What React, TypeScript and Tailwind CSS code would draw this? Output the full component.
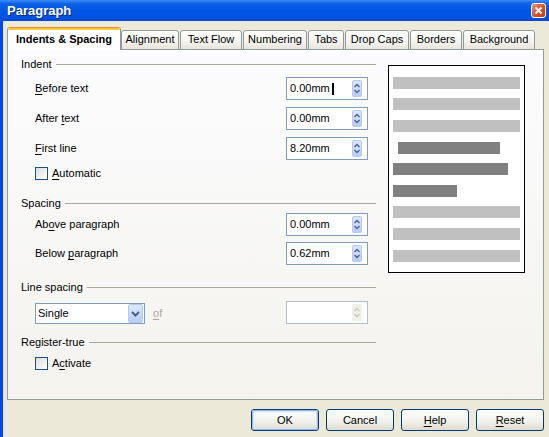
import React from "react";

// Windows XP styled "Paragraph" dialog

const U = ({ children }: { children: React.ReactNode }) => (
  <span className="underline underline-offset-[2px] decoration-[1px]">{children}</span>
);

const tabs = [
  { label: "Indents & Spacing", w: 114, ml: 0, active: true },
  { label: "Alignment", w: 58, ml: 0 },
  { label: "Text Flow", w: 62, ml: 1 },
  { label: "Numbering", w: 64, ml: 1 },
  { label: "Tabs", w: 36, ml: 1 },
  { label: "Drop Caps", w: 64, ml: 1 },
  { label: "Borders", w: 52, ml: 1 },
  { label: "Background", w: 72, ml: 1 },
];

const bars = [
  { top: 11, left: 4, w: 127, dark: false },
  { top: 9, left: 4, w: 127, dark: false },
  { top: 10, left: 4, w: 127, dark: false },
  { top: 10, left: 9, w: 102, dark: true },
  { top: 9, left: 4, w: 115, dark: true },
  { top: 10, left: 4, w: 64, dark: true },
  { top: 9, left: 4, w: 127, dark: false },
  { top: 10, left: 4, w: 127, dark: false },
  { top: 10, left: 4, w: 127, dark: false },
];

const SpinButton = ({ disabled }: { disabled?: boolean }) => (
  <div
    className={`w-[10px] h-[17px] rounded-[2px] flex items-center justify-center ${
      disabled
        ? "bg-[#f0efe8]"
        : "bg-[linear-gradient(to_bottom,#dde7fe,#b9ccf6)] border border-[#b5c8f2]"
    }`}
  >
    <svg width="8" height="13" viewBox="0 0 8 13">
      <path
        d="M1.5 5 L4 2.5 L6.5 5 M1.5 8 L4 10.5 L6.5 8"
        fill="none"
        stroke={disabled ? "#c9c8c0" : "#4d6185"}
        strokeWidth="1.4"
      />
    </svg>
  </div>
);

const SpinField = ({ value, caret, disabled }: { value?: string; caret?: boolean; disabled?: boolean }) => (
  <div
    className={`w-[82px] h-[23px] border bg-white flex items-center ${
      disabled ? "border-[#b2bdcd]" : "border-[#7f9db9]"
    }`}
  >
    <div className="flex-1 flex items-center pl-[3px] text-[11px] text-black">
      {value}
      {caret && <span className="ml-[2px] w-[2px] h-[12px] bg-black" />}
    </div>
    <SpinButton disabled={disabled} />
    <div className="w-[5px]" />
  </div>
);

const Checkbox = () => (
  <div className="w-[13px] h-[13px] border border-[#1c5180] bg-[linear-gradient(135deg,#dcdcd7,#ffffff)]" />
);

const Header = ({ children }: { children: React.ReactNode }) => (
  <div className="h-[14px] flex items-center text-[11px] text-black">
    <span>{children}</span>
    <div className="flex-1 ml-[4px] h-px bg-[#aca899]" />
  </div>
);

const Row = ({ label, value, caret, className }: { label: React.ReactNode; value: string; caret?: boolean; className: string }) => (
  <div className={`h-[23px] flex items-center ${className}`}>
    <div className="w-[265px] pl-[14px] text-[11px] text-black">{label}</div>
    <SpinField value={value} caret={caret} />
  </div>
);

const Button = ({ children, def }: { children: React.ReactNode; def?: boolean }) => (
  <div className="w-[68px] h-[22px] rounded-[3px] border border-[#003c74] bg-[linear-gradient(to_bottom,#ffffff,#f0f0ea_60%,#dedbcf)] flex items-center justify-center">
    <div
      className={`w-full h-full rounded-[2px] flex items-center justify-center text-[11px] text-black ${
        def ? "border border-[#98b8ea] shadow-[inset_0_0_0_1px_#cee0fb]" : ""
      }`}
    >
      {children}
    </div>
  </div>
);

export default function App() {
  return (
    <div className="w-[549px] h-[437px] bg-[#ece9d8] flex flex-col overflow-hidden font-['Liberation_Sans',Arial,sans-serif]">
      {/* title bar */}
      <div className="h-[21px] flex items-center bg-[linear-gradient(to_bottom,#3b8cf6_0%,#0d61e8_18%,#0055e5_50%,#0152e1_85%,#0443c9_100%)]">
        <span className="ml-[7px] text-[13px] font-bold text-white [text-shadow:1px_1px_0_#0a2a8a]">Paragraph</span>
        <div className="ml-auto mr-[3px] w-[15px] h-[15px] rounded-[3px] border border-white bg-[linear-gradient(135deg,#f09070,#d9542c_50%,#c03a12)] flex items-center justify-center">
          <svg width="9" height="9" viewBox="0 0 9 9">
            <path d="M1.5 1.5 L7.5 7.5 M7.5 1.5 L1.5 7.5" stroke="#fff" strokeWidth="1.8" />
          </svg>
        </div>
      </div>

      <div className="flex-1 flex flex-col border-l-[3px] border-[#0a45dc]">
        {/* tabs */}
        <div className="mt-[6px] h-[23px] flex items-end pl-[4px]">
          {tabs.map((t) =>
            t.active ? (
              <div
                key={t.label}
                style={{ width: t.w }}
                className="relative z-10 h-[23px] bg-white border-x border-[#919b9c] rounded-t-[3px] overflow-hidden flex flex-col"
              >
                <div className="h-[3px] bg-[#ffc83c] border-t border-[#e68b2c]" />
                <div className="flex-1 flex items-center justify-center pb-[2px] text-[11px] font-bold text-black">
                  {t.label}
                </div>
              </div>
            ) : (
              <div
                key={t.label}
                style={{ width: t.w, marginLeft: t.ml }}
                className="h-[20px] border border-[#919b9c] rounded-t-[3px] bg-[linear-gradient(to_bottom,#ffffff,#f4f3ee_60%,#e6e4dc)] flex items-center justify-center pb-[1px] text-[11px] text-black"
              >
                {t.label}
              </div>
            )
          )}
        </div>

        {/* tab page */}
        <div className="-mt-px ml-[4px] w-[537px] h-[351px] border border-[#919b9c] bg-[linear-gradient(to_bottom,#fcfcfe,#f4f3ee)] flex">
          <div className="w-[355px] ml-[13px] pt-[7px] flex flex-col">
            <Header>Indent</Header>
            <Row className="mt-[6px]" label={<><U>B</U>efore text</>} value="0.00mm" caret />
            <Row className="mt-[7px]" label={<>After <U>t</U>ext</>} value="0.00mm" />
            <Row className="mt-[7px]" label={<><U>F</U>irst line</>} value="8.20mm" />
            <div className="mt-[6px] h-[14px] pl-[14px] flex items-center gap-[4px] text-[11px] text-black">
              <Checkbox />
              <span>
                <U>A</U>utomatic
              </span>
            </div>

            <div className="mt-[16px]">
              <Header>Spacing</Header>
            </div>
            <Row className="mt-[3px]" label={<>Ab<U>o</U>ve paragraph</>} value="0.00mm" />
            <Row className="mt-[6px]" label={<>Below <U>p</U>aragraph</>} value="0.62mm" />

            <div className="mt-[15px]">
              <Header>Line spacing</Header>
            </div>
            <div className="mt-[7px] h-[23px] flex items-start">
              <div className="w-[265px] pl-[14px] flex items-center">
                <div className="mt-[2px] w-[110px] h-[21px] border border-[#7f9db9] bg-white flex items-center">
                  <span className="flex-1 pl-[2px] text-[11px] text-black">Single</span>
                  <div className="w-[15px] h-[19px] mr-px rounded-[2px] border border-[#b5c8f2] bg-[linear-gradient(to_bottom,#dde7fe,#b9ccf6)] flex items-center justify-center">
                    <svg width="9" height="6" viewBox="0 0 9 6">
                      <path d="M1 1 L4.5 4.5 L8 1" fill="none" stroke="#4d6185" strokeWidth="2" />
                    </svg>
                  </div>
                </div>
                <span className="ml-[8px] mt-[2px] text-[11px] text-[#aca899]">
                  <U>o</U>f
                </span>
              </div>
              <SpinField disabled />
            </div>

            <div className="mt-[11px]">
              <Header>Register-true</Header>
            </div>
            <div className="mt-[7px] h-[14px] pl-[14px] flex items-center gap-[4px] text-[11px] text-black">
              <Checkbox />
              <span>
                A<U>c</U>tivate
              </span>
            </div>
          </div>

          {/* preview */}
          <div className="ml-[12px] mt-[15px] w-[137px] h-[208px] border border-black bg-white flex flex-col">
            {bars.map((b, i) => (
              <div
                key={i}
                style={{ marginTop: b.top, marginLeft: b.left, width: b.w }}
                className={`h-[12px] ${b.dark ? "bg-[#808080]" : "bg-[#c0c0c0]"}`}
              />
            ))}
          </div>
        </div>

        {/* buttons */}
        <div className="mt-[9px] pr-[5px] flex justify-end gap-[7px]">
          <Button def>OK</Button>
          <Button>Cancel</Button>
          <Button>
            <U>H</U>elp
          </Button>
          <Button>
            <U>R</U>eset
          </Button>
        </div>
      </div>
    </div>
  );
}
